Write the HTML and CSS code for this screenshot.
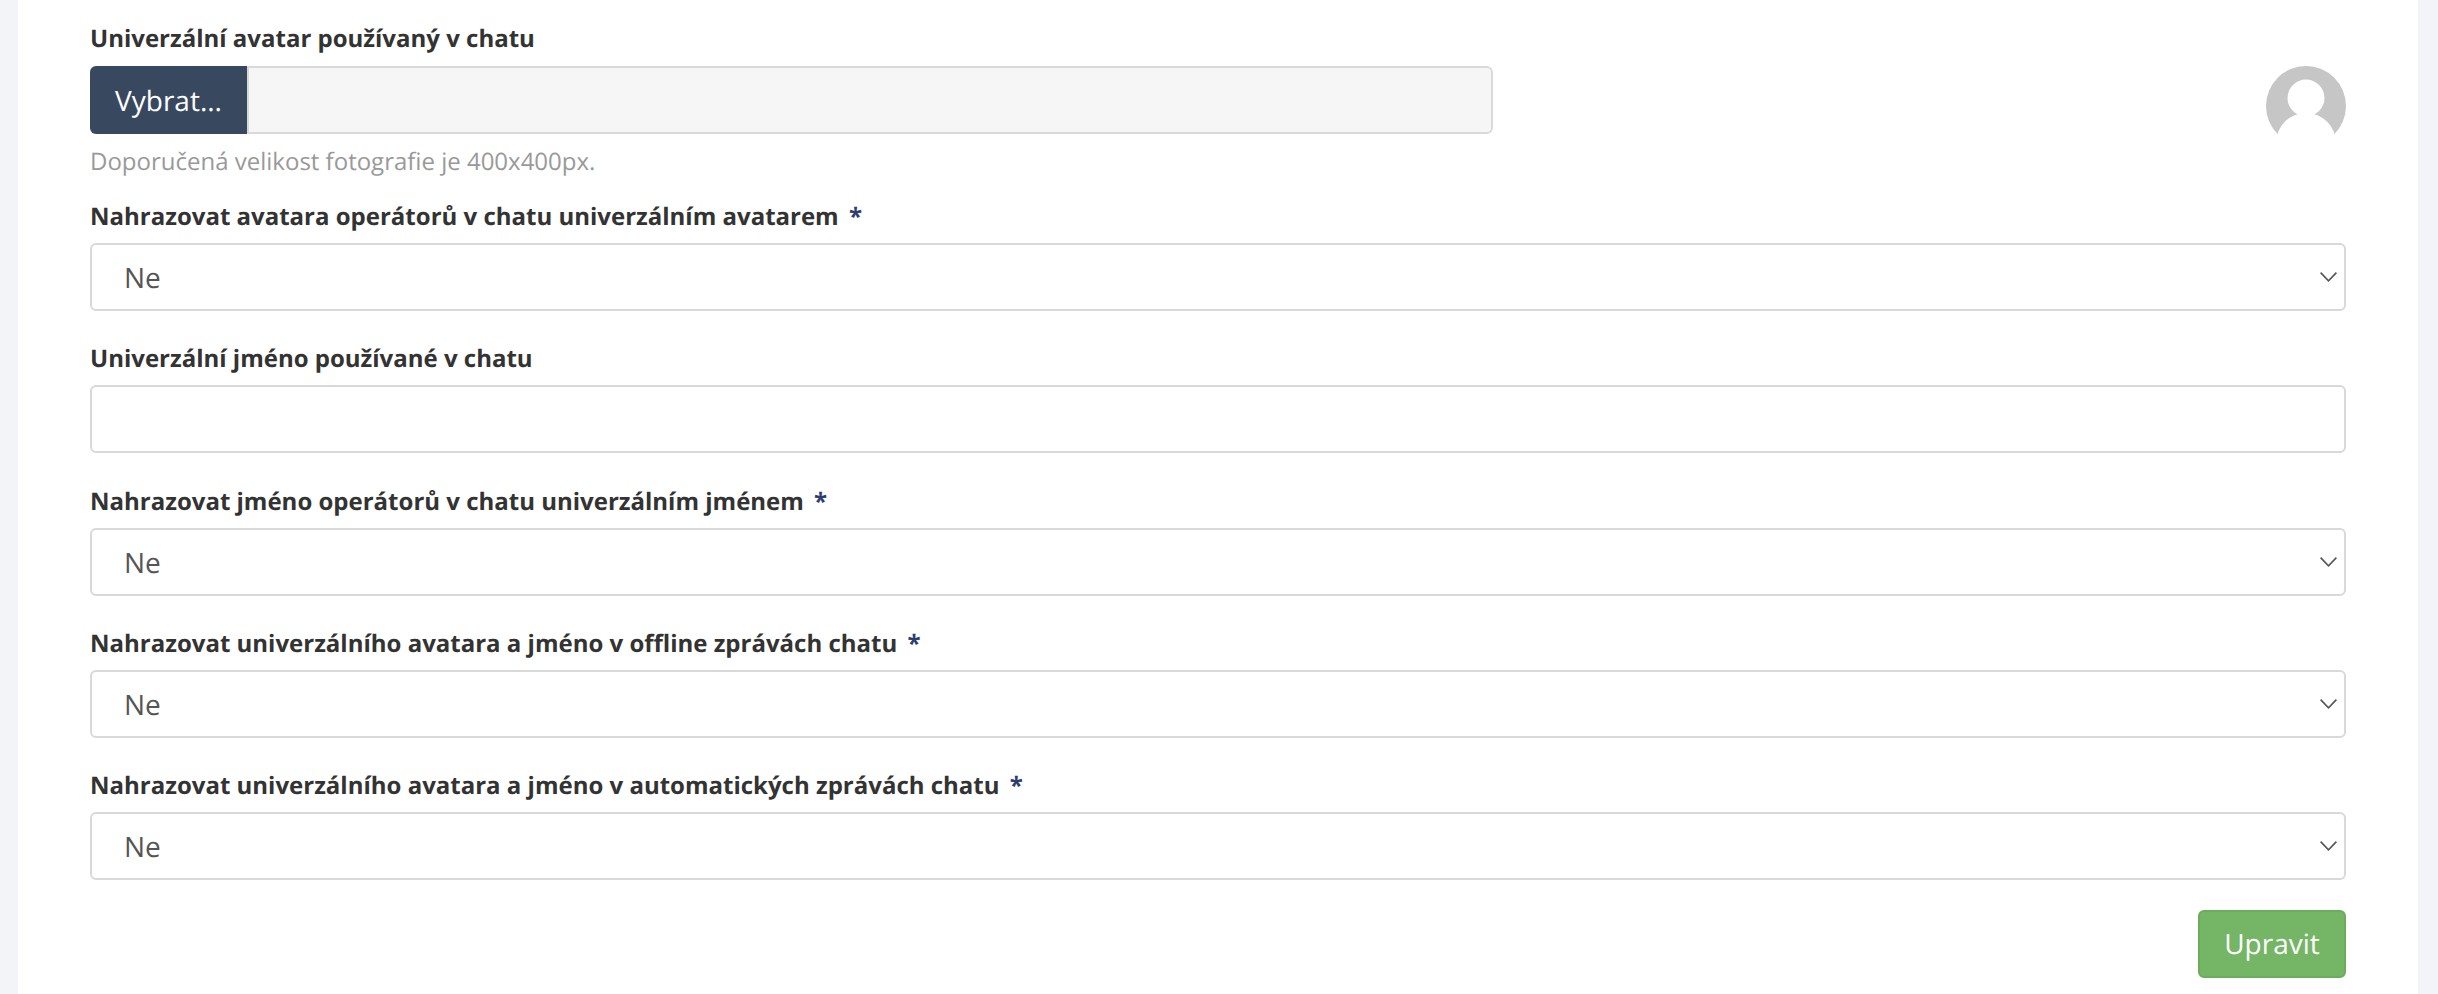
FILE: index.html
```html
<!DOCTYPE html>
<html lang="cs">
<head>
<meta charset="utf-8">
<title>Nastavení chatu</title>
<link rel="stylesheet" href="styles.css">
</head>
<body>
<main class="panel">
  <form class="form">
    <div class="avatar-row">
      <div class="avatar-fields">
        <label class="label">Univerzální avatar používaný v chatu</label>
        <div class="file">
          <span class="file-btn">Vybrat...</span>
          <span class="file-name"></span>
        </div>
        <p class="hint">Doporučená velikost fotografie je 400x400px.</p>
      </div>
      <svg class="avatar" viewBox="0 0 80 80" aria-hidden="true">
        <circle cx="40" cy="40" r="40" fill="#c6c6c6"/>
        <circle cx="40" cy="32" r="18.5" fill="#fff"/>
        <circle cx="40" cy="77" r="30" fill="#fff"/>
        <rect x="0" y="69" width="80" height="11" fill="#fff"/>
      </svg>
    </div>

    <div class="group">
      <label class="label">Nahrazovat avatara operátorů v chatu univerzálním avatarem <span class="req">*</span></label>
      <div class="select-wrap">
        <select class="control select"><option>Ne</option></select>
        <svg class="chevron" viewBox="0 0 17 10" aria-hidden="true"><path d="M.6.6 8.5 8.8 16.4.6" fill="none" stroke="#555" stroke-width="1.6"/></svg>
      </div>
    </div>

    <div class="group group-text">
      <label class="label">Univerzální jméno používané v chatu</label>
      <input class="control" type="text">
    </div>

    <div class="group">
      <label class="label">Nahrazovat jméno operátorů v chatu univerzálním jménem <span class="req">*</span></label>
      <div class="select-wrap">
        <select class="control select"><option>Ne</option></select>
        <svg class="chevron" viewBox="0 0 17 10" aria-hidden="true"><path d="M.6.6 8.5 8.8 16.4.6" fill="none" stroke="#555" stroke-width="1.6"/></svg>
      </div>
    </div>

    <div class="group">
      <label class="label">Nahrazovat univerzálního avatara a jméno v offline zprávách chatu <span class="req">*</span></label>
      <div class="select-wrap">
        <select class="control select"><option>Ne</option></select>
        <svg class="chevron" viewBox="0 0 17 10" aria-hidden="true"><path d="M.6.6 8.5 8.8 16.4.6" fill="none" stroke="#555" stroke-width="1.6"/></svg>
      </div>
    </div>

    <div class="group">
      <label class="label">Nahrazovat univerzálního avatara a jméno v automatických zprávách chatu <span class="req">*</span></label>
      <div class="select-wrap">
        <select class="control select"><option>Ne</option></select>
        <svg class="chevron" viewBox="0 0 17 10" aria-hidden="true"><path d="M.6.6 8.5 8.8 16.4.6" fill="none" stroke="#555" stroke-width="1.6"/></svg>
      </div>
    </div>

    <div class="actions">
      <button class="submit" type="button">Upravit</button>
    </div>
  </form>
</main>
</body>
</html>
```

FILE: styles.css
```css
* { box-sizing: border-box; }

html, body {
  margin: 0;
  height: 100%;
  overflow: hidden;
}

body {
  background: #f2f4f7;
  font-family: "Open Sans", "Liberation Sans", sans-serif;
  color: #333;
  font-size: 28px;
  text-rendering: geometricPrecision;
}

.panel {
  margin: 0 20px 0 18px;
  min-height: 994px;
  background: #fff;
  padding: 20px 72px 0;
}

.label {
  display: block;
  font-size: 24px;
  font-weight: 700;
  line-height: 36px;
  padding-top: 1px;
  margin-bottom: 8px;
  color: #333;
}

.req {
  color: #2c3e70;
  margin-left: 4px;
}

.avatar-row {
  display: flex;
  justify-content: space-between;
  align-items: flex-start;
  margin-bottom: 18px;
}

.avatar-fields {
  width: 1403px;
}

.avatar-fields .label {
  margin-bottom: 9px;
}

.avatar {
  width: 80px;
  height: 80px;
  margin-top: 46px;
  flex: none;
}

.file {
  display: flex;
  height: 68px;
  border-radius: 6px;
  overflow: hidden;
}

.file-btn {
  flex: none;
  width: 157px;
  padding-top: 2px;
  background: #38495f;
  color: #fff;
  display: flex;
  align-items: center;
  justify-content: center;
  font-size: 28px;
}

.file-name {
  flex: 1;
  background: #f6f6f6;
  border: 2px solid #d9d9d9;
  border-radius: 0 6px 6px 0;
}

.hint {
  margin: 10px 0 0;
  font-size: 24px;
  line-height: 36px;
  color: #999;
}

.group {
  margin-bottom: 29px;
}

.group-text {
  margin-bottom: 30px;
}

.control {
  display: block;
  width: 100%;
  height: 68px;
  border: 2px solid #d9d9d9;
  border-radius: 6px;
  background: #fff;
  padding: 2px 32px 0;
  font-family: inherit;
  font-size: 28px;
  color: #555;
  outline: none;
  text-rendering: geometricPrecision;
}

.select {
  appearance: none;
  -webkit-appearance: none;
}

.select-wrap {
  position: relative;
}

.chevron {
  position: absolute;
  right: 9px;
  top: 29px;
  width: 17px;
  height: 10px;
  pointer-events: none;
}

.actions {
  display: flex;
  justify-content: flex-end;
  margin-top: 30px;
}

.submit {
  width: 148px;
  height: 68px;
  background: #74b566;
  border: 2px solid #6bad5d;
  border-radius: 6px;
  color: #fff;
  font-family: inherit;
  font-size: 28px;
  padding: 0;
  text-rendering: geometricPrecision;
}
```
